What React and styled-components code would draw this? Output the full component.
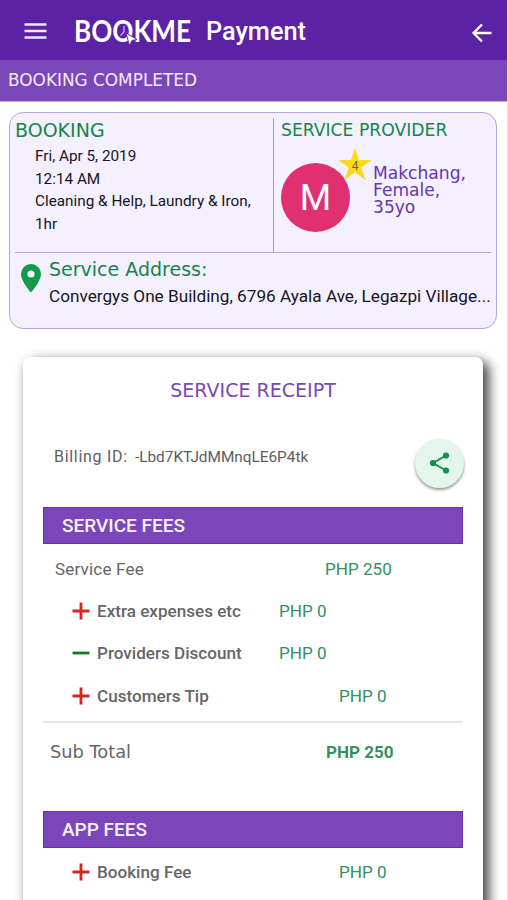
import React from "react";
import styled, { createGlobalStyle } from "styled-components";

const GlobalStyle = createGlobalStyle`
  * {
    box-sizing: border-box;
  }
  body {
    margin: 0;
    background-color: #fff;
    font-family: Roboto, "Liberation Sans", sans-serif;
  }
`;

const Page = styled.div`
  width: 508px;
  height: 900px;
  overflow: hidden;
  border-right: 1px solid #dedede;
  background-color: #fff;
`;

const Header = styled.header`
  height: 60px;
  display: flex;
  align-items: center;
  padding: 2px 14px 0 24px;
  background-color: #5c22a6;
  color: white;
`;

const Title = styled.h1`
  flex: 1;
  margin: 2px 0 0 13px;
  font-size: 25.3px;
  font-weight: 500;
  line-height: 30px;
`;

const IconButton = styled.button`
  display: flex;
  padding: 0;
  border: none;
  background: none;
  color: inherit;
`;

const MenuButton = styled(IconButton)`
  margin-right: 27px;
`;

const BackButton = styled(IconButton)`
  margin-top: 4px;
`;

const Status = styled.div`
  height: 42px;
  padding-left: 8px;
  background-color: #7a46b9;
  border-bottom: 1px solid #c5aee0;
  color: #f3e9fd;
  font-family: "DejaVu Sans", sans-serif;
  font-size: 16.9px;
  line-height: 41px;
`;

const BookingCard = styled.section`
  margin: 10px 10px 0 9px;
  height: 217px;
  padding: 5px 5px 0;
  border: 1px solid #b5a3dc;
  border-radius: 14px;
  background-color: #f4f0ff;
`;

const BookingTop = styled.div`
  display: grid;
  grid-template-columns: 259px 1fr;
  height: 135px;
  border-bottom: 1px solid #b7a7d8;
`;

const BookingInfo = styled.div`
  border-right: 1px solid #a495cb;
`;

const Provider = styled.div`
  padding-left: 7px;
`;

const Heading = styled.h2`
  margin: 0;
  color: #15854a;
  font-family: "DejaVu Sans", sans-serif;
  font-size: ${(props) => props.$size};
  font-weight: 400;
  line-height: 24px;
`;

const Details = styled.p`
  margin: 3px 0 0 20px;
  color: #17151c;
  font-size: 15.3px;
  line-height: 22.6px;
`;

const ProviderRow = styled.div`
  display: flex;
  padding-top: 21px;
`;

const AvatarBox = styled.div`
  position: relative;
  width: 92px;
`;

const Avatar = styled.div`
  display: flex;
  align-items: center;
  justify-content: center;
  width: 69px;
  height: 69px;
  border-radius: 50%;
  background-color: #e0306f;
  color: white;
  font-size: 36px;
`;

const Star = styled.svg`
  position: absolute;
  top: -15px;
  left: 57px;
`;

const ProviderName = styled.div`
  padding-top: 2px;
  color: #6436b0;
  font-family: "DejaVu Sans", sans-serif;
  font-size: 17.1px;
  line-height: 17px;
`;

const Address = styled.div`
  display: flex;
  padding: 4px 0 0 6px;
`;

const PinBox = styled.div`
  padding-top: 7px;
`;

const AddressText = styled.div`
  margin-left: 8px;
`;

const AddressLine = styled.p`
  margin: 3px 0 0;
  color: #17151c;
  font-size: 17.18px;
  line-height: 24px;
  white-space: nowrap;
`;

const Receipt = styled.section`
  height: 620px;
  margin: 28px 24px 0 23px;
  padding: 20px 20px 0;
  border-radius: 8px;
  background-color: #fff;
  box-shadow: 5px 5px 12px 1px rgba(0, 0, 0, 0.72);
`;

const ReceiptTitle = styled.h2`
  margin: 0;
  color: #7848b9;
  font-family: "DejaVu Sans", sans-serif;
  font-size: 19.05px;
  font-weight: 400;
  line-height: 26px;
  text-align: center;
`;

const Billing = styled.div`
  display: flex;
  align-items: center;
  height: 50px;
  margin-top: 35px;
  padding-left: 11px;
  color: #5d5d5d;
  font-size: 15.35px;
`;

const BillingLabel = styled.span`
  width: 81px;
  padding-bottom: 13px;
  font-size: 16px;
  letter-spacing: 0.7px;
`;

const BillingId = styled.span`
  flex: 1;
  padding-bottom: 13px;
`;

const ShareButton = styled.button`
  display: flex;
  align-items: center;
  justify-content: center;
  width: 49px;
  height: 49px;
  margin-right: -1px;
  padding: 0 2px 0 0;
  border: none;
  border-radius: 50%;
  background-color: #e4f5ec;
  box-shadow: 0 2px 3px rgba(0, 0, 0, 0.4);
  color: #0f9152;
`;

const SectionBar = styled.h3`
  height: 37px;
  margin: ${(props) => props.$top} 0 0;
  padding-left: 18px;
  border: 1px solid #6b32b0;
  background-color: #7a46b9;
  color: #f7f0ff;
  font-size: 19px;
  font-weight: 500;
  line-height: 36px;
`;

const Fees = styled.div`
  padding-top: 3.5px;
`;

const Fee = styled.div`
  display: flex;
  align-items: center;
  height: 42.3px;
  padding-left: ${(props) => (props.$signed ? "29px" : "12px")};
  color: #666;
  font-size: 17.1px;
`;

const FeeLabel = styled.span`
  width: ${(props) => props.$width};
  margin-left: ${(props) => (props.$signed ? "7px" : "0")};
  font-weight: ${(props) => (props.$signed ? 500 : 400)};
  letter-spacing: ${(props) => (props.$signed ? "0" : "0.15px")};
  white-space: nowrap;
`;

const Amount = styled.span`
  color: #35905f;
  font-weight: ${(props) => (props.$bold ? 700 : 400)};
`;

const SubTotal = styled.div`
  display: flex;
  align-items: center;
  height: 60px;
  margin-top: 4px;
  padding-left: 7px;
  border-top: 2px solid #e6e6e6;
  color: #666;
  font-size: 17px;
`;

const SubTotalLabel = styled.span`
  width: 276px;
  font-family: "DejaVu Sans", sans-serif;
  font-size: 17.8px;
`;

const Logo = () => (
  <svg width="119" height="40" viewBox="0 0 119 40">
    <text
      x="0"
      y="31"
      fill="#fff"
      fontFamily="Lato"
      fontSize="30.5"
      fontWeight="700"
      textLength="117"
      lengthAdjust="spacingAndGlyphs"
    >
      BOOKME
    </text>
    <path d="M50 15v6l-3.500 3.500" fill="none" stroke="#cdb9e8" strokeWidth="1.2" />
    <path d="M52 22l11 6.500-5 1-2.500 5z" fill="#fff" stroke="#5c22a6" strokeWidth=".9" />
  </svg>
);

const MenuIcon = () => (
  <svg width="23" height="18" viewBox="0 0 23 18" stroke="#efe6fa" strokeWidth="2.3">
    <path d="M.5 2.500h22M.5 9h22M.5 15.500h22" />
  </svg>
);

const BackIcon = () => (
  <svg width="22" height="22" viewBox="0 0 22 22" fill="none" stroke="#fff" strokeWidth="2.3">
    <path d="M11 2.500L2.500 11l8.500 8.500M3 11h17.500" />
  </svg>
);

const PinIcon = () => (
  <svg width="20" height="29" viewBox="0 0 20 29">
    <path
      fill="#159a4c"
      fillRule="evenodd"
      d="M10 0A10 10 0 0 0 0 10c0 7.500 10 18.500 10 18.500S20 17.500 20 10A10 10 0 0 0 10 0zm0 6.400a3.600 3.600 0 1 1 0 7.200 3.600 3.600 0 0 1 0-7.200z"
    />
  </svg>
);

const ShareIcon = () => (
  <svg width="22" height="24" viewBox="0 0 22 24" fill="currentColor">
    <path d="M18 4.500L5 12l13 7.500" fill="none" stroke="currentColor" strokeWidth="2" />
    <circle cx="18" cy="4.500" r="3.100" />
    <circle cx="5" cy="12" r="3.100" />
    <circle cx="18" cy="19.500" r="3.100" />
  </svg>
);

const Sign = ({ minus }) => (
  <svg width="18" height="18" viewBox="0 0 18 18" fill="none" strokeWidth="2.8">
    <path
      d={minus ? "M.5 9h17" : "M.5 9h17M9 .5v17"}
      stroke={minus ? "#0f7d26" : "#d3281f"}
    />
  </svg>
);

const SignedFee = ({ label, amount, width, minus }) => (
  <Fee $signed>
    <Sign minus={minus} />
    <FeeLabel $signed $width={width}>
      {label}
    </FeeLabel>
    <Amount>{amount}</Amount>
  </Fee>
);

const App = () => {
  return (
    <Page>
      <GlobalStyle />
      <Header>
        <MenuButton aria-label="Menu">
          <MenuIcon />
        </MenuButton>
        <Logo />
        <Title>Payment</Title>
        <BackButton aria-label="Back">
          <BackIcon />
        </BackButton>
      </Header>
      <Status>BOOKING COMPLETED</Status>
      <BookingCard>
        <BookingTop>
          <BookingInfo>
            <Heading $size="19px">BOOKING</Heading>
            <Details>
              Fri, Apr 5, 2019
              <br />
              12:14 AM
              <br />
              Cleaning &amp; Help, Laundry &amp; Iron,
              <br />
              1hr
            </Details>
          </BookingInfo>
          <Provider>
            <Heading $size="17.2px">SERVICE PROVIDER</Heading>
            <ProviderRow>
              <AvatarBox>
                <Avatar>M</Avatar>
                <Star width="34" height="33" viewBox="0 0 34 33">
                  <path
                    fill="#fbd91c"
                    d="M17 0l4 12h12.500l-10.200 7.500L27.500 32 17 24.300 6.500 32l4.200-12.500L.5 12H13z"
                  />
                  <text x="17" y="21.500" fill="#80601a" fontSize="12" textAnchor="middle">
                    4
                  </text>
                </Star>
              </AvatarBox>
              <ProviderName>
                Makchang,
                <br />
                Female,
                <br />
                35yo
              </ProviderName>
            </ProviderRow>
          </Provider>
        </BookingTop>
        <Address>
          <PinBox>
            <PinIcon />
          </PinBox>
          <AddressText>
            <Heading $size="19px">Service Address:</Heading>
            <AddressLine>
              Convergys One Building, 6796 Ayala Ave, Legazpi Village...
            </AddressLine>
          </AddressText>
        </Address>
      </BookingCard>
      <Receipt>
        <ReceiptTitle>SERVICE RECEIPT</ReceiptTitle>
        <Billing>
          <BillingLabel>Billing ID:</BillingLabel>
          <BillingId>-Lbd7KTJdMMnqLE6P4tk</BillingId>
          <ShareButton aria-label="Share">
            <ShareIcon />
          </ShareButton>
        </Billing>
        <SectionBar $top="19px">SERVICE FEES</SectionBar>
        <Fees>
          <Fee>
            <FeeLabel $width="270px">Service Fee</FeeLabel>
            <Amount>PHP 250</Amount>
          </Fee>
          <SignedFee label="Extra expenses etc" amount="PHP 0" width="182px" />
          <SignedFee label="Providers Discount" amount="PHP 0" width="182px" minus />
          <SignedFee label="Customers Tip" amount="PHP 0" width="242px" />
        </Fees>
        <SubTotal>
          <SubTotalLabel>Sub Total</SubTotalLabel>
          <Amount $bold>PHP 250</Amount>
        </SubTotal>
        <SectionBar $top="30px">APP FEES</SectionBar>
        <Fees>
          <SignedFee label="Booking Fee" amount="PHP 0" width="242px" />
        </Fees>
      </Receipt>
    </Page>
  );
};

export default App;
